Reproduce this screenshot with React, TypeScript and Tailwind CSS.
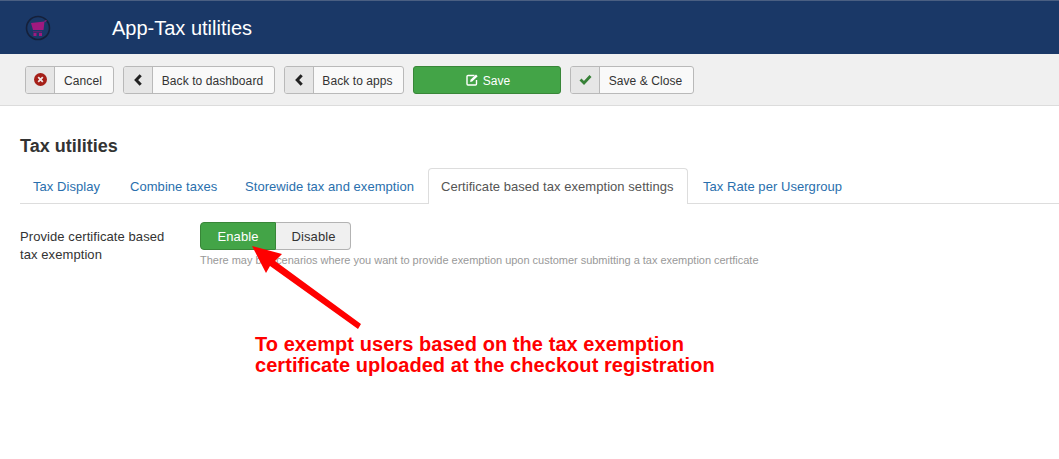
import React from "react";

function CartLogo() {
  return (
    <svg width="26" height="26" viewBox="0 0 26 26" className="block">
      <circle cx="13" cy="13" r="11.5" fill="#1a3867" stroke="#15203a" strokeWidth="1.6" />
      <path d="M6 8 L19.5 6.5 L18.5 15 L8 15 Z" fill="#a0197f" />
      <path d="M19.5 6.5 L21.5 5.5" stroke="#a0197f" strokeWidth="1.2" />
      <rect x="8" y="16.3" width="9" height="1" fill="#7a1a72" />
      <rect x="8.5" y="18" width="3" height="3" fill="#a0197f" />
      <rect x="14" y="18" width="3" height="3" fill="#a0197f" />
    </svg>
  );
}

function CancelIcon() {
  return (
    <svg width="13" height="13" viewBox="0 0 13 13">
      <circle cx="6.5" cy="6.5" r="6.5" fill="#a51f18" />
      <path d="M4.2 4.2 L8.8 8.8 M8.8 4.2 L4.2 8.8" stroke="#f0e6e6" strokeWidth="1.8" />
    </svg>
  );
}

function ChevronIcon() {
  return (
    <svg width="10" height="12" viewBox="0 0 10 12">
      <path d="M7.7 1.3 L3.2 6 L7.7 10.7" fill="none" stroke="#222" strokeWidth="3" />
    </svg>
  );
}

function CheckIcon() {
  return (
    <svg width="13" height="11" viewBox="0 0 13 11">
      <path d="M1.5 5.5 L5 9 L11.5 2" fill="none" stroke="#378137" strokeWidth="2.8" />
    </svg>
  );
}

function EditIcon() {
  return (
    <svg width="12" height="12" viewBox="0 0 12 12">
      <path d="M8.5 1.5 H2 A1 1 0 0 0 1 2.5 V10 A1 1 0 0 0 2 11 H9.5 A1 1 0 0 0 10.5 10 V6" fill="none" stroke="#fff" strokeWidth="1.4" />
      <path d="M4.5 5.8 L10 0.5 L11.7 2.2 L6.2 7.6 L4.2 8 Z" fill="#fff" />
    </svg>
  );
}

function ToolButton({ icon, label, width }: { icon: React.ReactNode; label: string; width: string }) {
  return (
    <button className={`flex h-[28px] ${width} items-stretch overflow-hidden rounded-[3px] border border-[#b9b9b9] bg-[#f9f9f9] text-[12px] tracking-[0.08px] text-[#333]`}>
      <span className="flex w-[29px] shrink-0 items-center justify-center border-r border-[#b9b9b9] bg-[#e6e6e6]">{icon}</span>
      <span className="flex flex-1 items-center justify-center pr-[2px] pt-[2px]">{label}</span>
    </button>
  );
}

const tabs = ["Tax Display", "Combine taxes", "Storewide tax and exemption", "Certificate based tax exemption settings", "Tax Rate per Usergroup"];
const tabWidths = ["w-[95px]", "w-[113px]", "w-[194px]", "w-[260px]", "w-[164px]"];

export default function App() {
  return (
    <div className="relative h-[459px] w-[1059px] overflow-hidden bg-white font-['Liberation_Sans',Arial,sans-serif]">
      <header className="flex h-[54px] items-center border-t border-[#4a5f82] bg-[#1a3867]">
        <div className="ml-[25px] w-[87px]"><CartLogo /></div>
        <h1 className="text-[20px] leading-[24px] text-white">App-Tax utilities</h1>
      </header>

      <div className="flex h-[52px] items-center gap-[9px] border-b border-[#dcdcdc] bg-[#f0f0f0] pl-[25px]">
        <ToolButton icon={<CancelIcon />} label="Cancel" width="w-[89px]" />
        <ToolButton icon={<ChevronIcon />} label="Back to dashboard" width="w-[152px]" />
        <ToolButton icon={<ChevronIcon />} label="Back to apps" width="w-[120px]" />
        <button className="flex h-[28px] w-[148px] items-center justify-center gap-[5px] rounded-[3px] border border-[#388638] bg-[#43a447] pl-[2px] text-[12px] tracking-[0.08px] text-white">
          <EditIcon />
          <span className="pt-[2px]">Save</span>
        </button>
        <ToolButton icon={<CheckIcon />} label="Save & Close" width="w-[124px]" />
      </div>

      <main className="pl-[20px]">
        <h2 className="mt-[29px] text-[18px] font-bold leading-[22px] text-[#333]">Tax utilities</h2>
        <ul className="mt-[11px] flex h-[36px] gap-[2px] border-b border-[#dddddd] text-[13px] tracking-[0.05px]">
          {tabs.map((t, i) => (
            <li
              key={t}
              className={
                i === 3
                  ? `h-[36px] ${tabWidths[i]} whitespace-nowrap rounded-t-[4px] border border-b-0 border-[#dddddd] bg-white pl-[12px] pt-[9px] leading-[18px] text-[#555]`
                  : `h-[35px] ${tabWidths[i]} whitespace-nowrap pl-[13px] pt-[10px] leading-[18px] text-[#2a6fad]`
              }
            >
              {t}
            </li>
          ))}
        </ul>

        <div className="mt-[18px] flex">
          <label className="w-[180px] pt-[6px] text-[13px] leading-[18px] tracking-[0.08px] text-[#333]">
            Provide certificate based
            <br />
            tax exemption
          </label>
          <div>
            <div className="flex h-[28px] w-[151px] text-[13px] tracking-[0.1px]">
              <span className="flex w-[76px] items-center justify-center rounded-l-[4px] border border-[#388638] bg-[#43a447] pt-[1px] text-white">Enable</span>
              <span className="flex w-[75px] items-center justify-center rounded-r-[4px] border border-l-0 border-[#b3b3b3] bg-[#f0f0f0] pl-[1px] pt-[1px] text-[#333]">Disable</span>
            </div>
            <p className="mt-[3px] whitespace-nowrap text-[11px] leading-[14px] tracking-[-0.02px] text-[#999999]">
              There may be scenarios where you want to provide exemption upon customer submitting a tax exemption certficate
            </p>
          </div>
        </div>
      </main>

      <svg className="absolute left-0 top-0" width="1059" height="459" viewBox="0 0 1059 459">
        <path d="M252 246 L282 254 L275 261 L361 324 L358 329 L270 266 L266 273 Z" fill="#ff0000" />
      </svg>
      <p className="absolute left-[255px] top-[334px] whitespace-nowrap text-[20px] font-bold leading-[21px] tracking-[0.06px] text-[#ff0000]">
        To exempt users based on the tax exemption
        <br />
        certificate uploaded at the checkout registration
      </p>
    </div>
  );
}
